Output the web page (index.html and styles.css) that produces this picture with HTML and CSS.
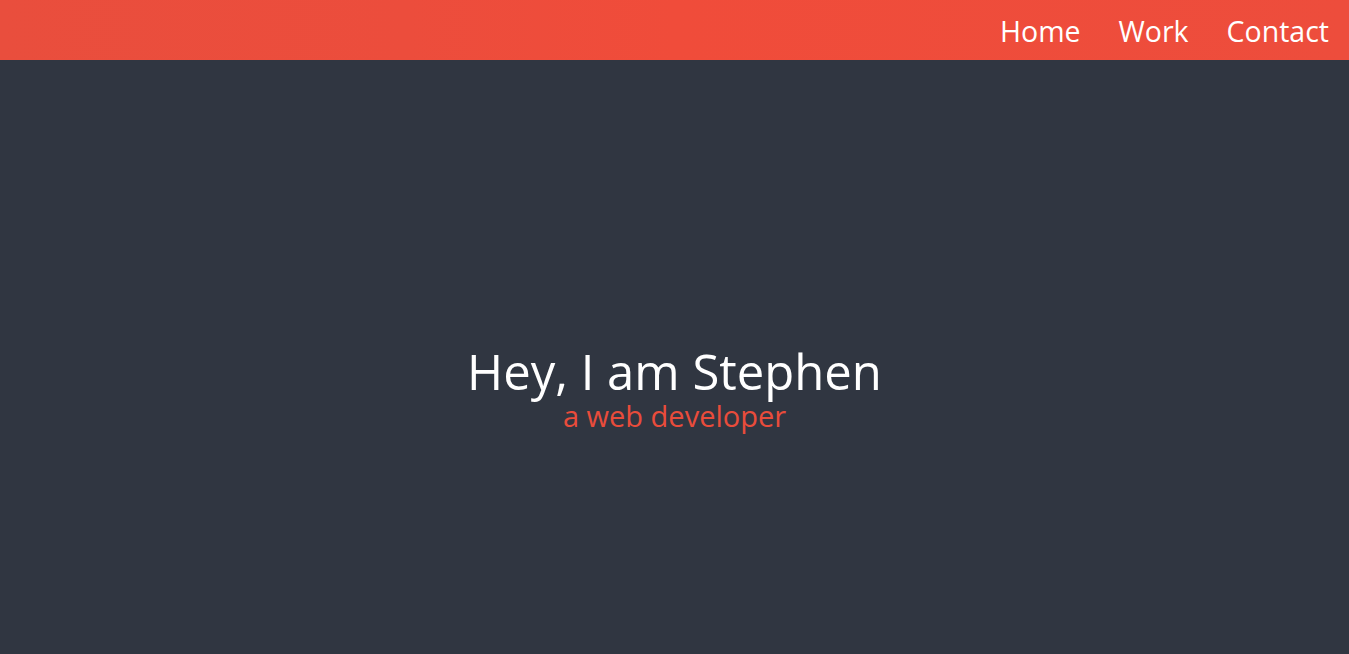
FILE: index.html
```html
<!DOCTYPE html>
<html lang="en">
<head>
<meta charset="utf-8">
<title>Stephen</title>
<link rel="stylesheet" href="styles.css">
</head>
<body>
<header class="topbar">
  <nav class="nav">
    <a class="nav-link" href="#">Home</a>
    <a class="nav-link" href="#">Work</a>
    <a class="nav-link" href="#">Contact</a>
  </nav>
</header>
<main class="hero">
  <div class="hero-text">
    <h1 class="hero-title">Hey, I am Stephen</h1>
    <p class="hero-sub">a web developer</p>
  </div>
</main>
</body>
</html>
```

FILE: styles.css
```css
html, body {
  margin: 0;
  padding: 0;
  height: 100%;
}
body {
  font-family: "Open Sans", "DejaVu Sans", sans-serif;
  background: #303641;
  color: #ffffff;
}
.topbar {
  height: 60px;
  background: linear-gradient(90deg, #e94e3d 0%, #ec4d3c 30%, #f04c3a 50%, #ed4d3c 100%);
  display: flex;
  justify-content: flex-end;
  align-items: center;
  padding-right: 20px;
}
.nav {
  display: flex;
  gap: 38px;
  padding-top: 2px;
}
.nav-link {
  color: #ffffff;
  text-decoration: none;
  font-size: 28.5px;
}
.hero {
  height: 594px;
  display: flex;
  justify-content: center;
  align-items: center;
  padding-top: 62px;
  box-sizing: border-box;
}
.hero-text {
  text-align: center;
}
.hero-title {
  margin: 0;
  font-weight: 400;
  font-size: 49px;
  line-height: 56px;
}
.hero-sub {
  margin: 0;
  color: #e94c3b;
  font-size: 29px;
  line-height: 34px;
}
```
